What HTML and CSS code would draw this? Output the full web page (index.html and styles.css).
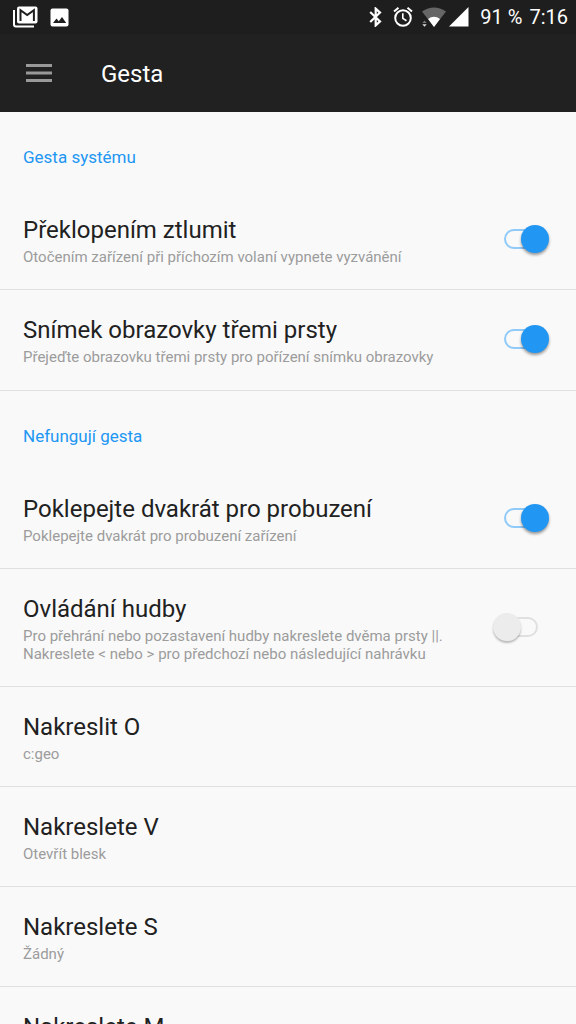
FILE: index.html
```html
<!DOCTYPE html>
<html lang="cs">
<head>
<meta charset="utf-8">
<meta name="viewport" content="width=device-width, initial-scale=1">
<title>Gesta</title>
<link rel="stylesheet" href="styles.css">
</head>
<body>
<div class="statusbar">
  <div class="notifications">
    <svg width="25" height="22" viewBox="0 0 25 22" aria-hidden="true">
      <path d="M1 4v14.500a2 2 0 0 0 2 2h18" fill="none" stroke="#fff" stroke-width="2"/>
      <rect x="4" y="0.500" width="20.500" height="17" rx="2" fill="#fff"/>
      <path d="M7.500 15V4.200l6.700 4.800 6.700-4.800V15" fill="none" stroke="#1e1e1e" stroke-width="2"/>
    </svg>
    <svg width="19" height="19" viewBox="0 0 19 19" aria-hidden="true">
      <rect x="0.500" y="0.500" width="18" height="18" rx="2" fill="#fff"/>
      <path d="M3 15l3.500-4.500 2.300 2.800L12 9l4.200 6z" fill="#1e1e1e"/>
    </svg>
  </div>
  <div class="indicators">
    <svg width="13" height="20" viewBox="0 0 13 20" aria-hidden="true">
      <path d="M1.200 5l9.800 9.400-4.300 4V1.600l4.300 4L1.200 15" fill="none" stroke="#fff" stroke-width="2.200"/>
    </svg>
    <svg class="alarm" width="20" height="20" viewBox="0 0 20 20" aria-hidden="true">
      <g fill="none" stroke="#fff" stroke-width="2">
        <circle cx="10" cy="11" r="7.800"/>
        <path d="M1 4.500l4.500-3.700M19 4.500L14.500.800"/>
        <path d="M9.800 6.200v5.200l3.700 2.300" stroke-width="1.600"/>
      </g>
    </svg>
    <svg class="wifi" width="24" height="20" viewBox="0 0 24 20" aria-hidden="true">
      <path d="M0 4.500Q12-3.500 24 4.500L12 20z" fill="#666"/>
      <path d="M0 12h6.200l5 8H0z" fill="#1e1e1e"/>
      <path d="M6 12Q12 7.500 18 12l-6 8z" fill="#fff"/>
      <path d="M2.500 13.500l2.200 2.500H.300z" fill="#777"/>
      <path d="M2.500 19.800L.300 17.200h4.400z" fill="#ddd"/>
    </svg>
    <svg class="signal" width="20" height="20" viewBox="0 0 20 20" aria-hidden="true">
      <path d="M0 19.500L19.500 0v19.500z" fill="#fff"/>
    </svg>
    <span class="battery">91 %</span>
    <time>7:16</time>
  </div>
</div>
<header class="appbar">
  <button class="menu" type="button" aria-label="Nabídka">
    <svg width="26" height="18" viewBox="0 0 26 18" aria-hidden="true">
      <path d="M0 1.500h26M0 9h26M0 16.500h26" stroke="#999" stroke-width="2.800"/>
    </svg>
  </button>
  <h1>Gesta</h1>
</header>
<main class="settings">
  <section class="group">
    <h2>Gesta systému</h2>
    <label class="row">
      <span class="text"><span class="title">Překlopením ztlumit</span><span class="summary">Otočením zařízení při příchozím volaní vypnete vyzvánění</span></span>
      <input class="switch" type="checkbox" role="switch" checked>
    </label>
    <label class="row">
      <span class="text"><span class="title">Snímek obrazovky třemi prsty</span><span class="summary">Přejeďte obrazovku třemi prsty pro pořízení snímku obrazovky</span></span>
      <input class="switch" type="checkbox" role="switch" checked>
    </label>
  </section>
  <section class="group">
    <h2>Nefungují gesta</h2>
    <label class="row">
      <span class="text"><span class="title">Poklepejte dvakrát pro probuzení</span><span class="summary">Poklepejte dvakrát pro probuzení zařízení</span></span>
      <input class="switch" type="checkbox" role="switch" checked>
    </label>
    <label class="row">
      <span class="text"><span class="title">Ovládání hudby</span><span class="summary">Pro přehrání nebo pozastavení hudby nakreslete dvěma prsty ||.<br>Nakreslete &lt; nebo &gt; pro předchozí nebo následující nahrávku</span></span>
      <input class="switch" type="checkbox" role="switch">
    </label>
    <button class="row" type="button"><span class="text"><span class="title">Nakreslit O</span><span class="summary">c:geo</span></span></button>
    <button class="row" type="button"><span class="text"><span class="title">Nakreslete V</span><span class="summary">Otevřít blesk</span></span></button>
    <button class="row" type="button"><span class="text"><span class="title">Nakreslete S</span><span class="summary">Žádný</span></span></button>
    <button class="row" type="button"><span class="text"><span class="title">Nakreslete M</span></span></button>
  </section>
</main>
</body>
</html>
```
FILE: styles.css
```css
* {
  box-sizing: border-box;
}

body {
  display: flex;
  flex-direction: column;
  height: 100vh;
  margin: 0;
  overflow: hidden;
  background: #f9f9f9;
  color: #212121;
  font-family: Roboto, "Noto Sans", sans-serif;
}

button {
  border: 0;
  background: none;
  color: inherit;
  font: inherit;
  text-align: left;
}

svg {
  display: block;
}

.statusbar {
  display: flex;
  flex: none;
  align-items: center;
  justify-content: space-between;
  height: 34px;
  padding: 0 8px 0 13px;
  background: #1e1e1e;
  color: #fff;
  font-size: 20px;
}

.notifications,
.indicators {
  display: flex;
  align-items: center;
}

.notifications {
  gap: 12px;
}

.alarm {
  margin-left: 11px;
}

.wifi {
  margin-left: 9px;
}

.signal {
  margin-left: 3px;
}

.battery {
  margin: 0 7px 0 11px;
}

.appbar {
  display: flex;
  flex: none;
  align-items: center;
  height: 78px;
  padding: 0 26px;
  background: #212121;
  color: #fff;
}

.menu {
  padding: 0;
}

.appbar h1 {
  margin: 0 0 0 49px;
  padding-top: 2px;
  font-size: 24px;
  font-weight: 400;
}

.settings {
  flex: 1;
  min-height: 0;
  overflow-y: auto;
  scrollbar-width: none;
}

.group {
  padding-bottom: 1px;
}

.group h2 {
  margin: 0;
  padding: 35px 23px 23px;
  color: #2196f3;
  font-size: 17px;
  font-weight: 400;
  line-height: 20px;
}

.group + .group {
  border-top: 1px solid #e0e0e0;
}

.row {
  display: flex;
  align-items: center;
  justify-content: space-between;
  width: 100%;
  padding: 24px 38px 23px 23px;
}

.row + .row {
  border-top: 1px solid #e0e0e0;
}

.text {
  display: flex;
  flex-direction: column;
  gap: 2px;
}

.title {
  font-size: 24px;
  line-height: 32px;
}

.summary {
  color: #9c9c9c;
  font-size: 15px;
  line-height: 18px;
}

.switch {
  position: relative;
  flex: none;
  width: 34px;
  height: 20px;
  margin: 0 0 2px;
  border: 2px solid #e0e0e0;
  border-radius: 10px;
  appearance: none;
}

.switch::before {
  content: "";
  position: absolute;
  top: -6px;
  left: -13px;
  width: 28px;
  height: 28px;
  border-radius: 50%;
  background: #ececec;
  box-shadow: 0 2px 2px rgba(0, 0, 0, 0.25);
}

.switch:checked {
  border-color: #90caf9;
}

.switch:checked::before {
  left: 15px;
  background: #2196f3;
  box-shadow: 0 2px 3px rgba(0, 0, 0, 0.4);
}
```
